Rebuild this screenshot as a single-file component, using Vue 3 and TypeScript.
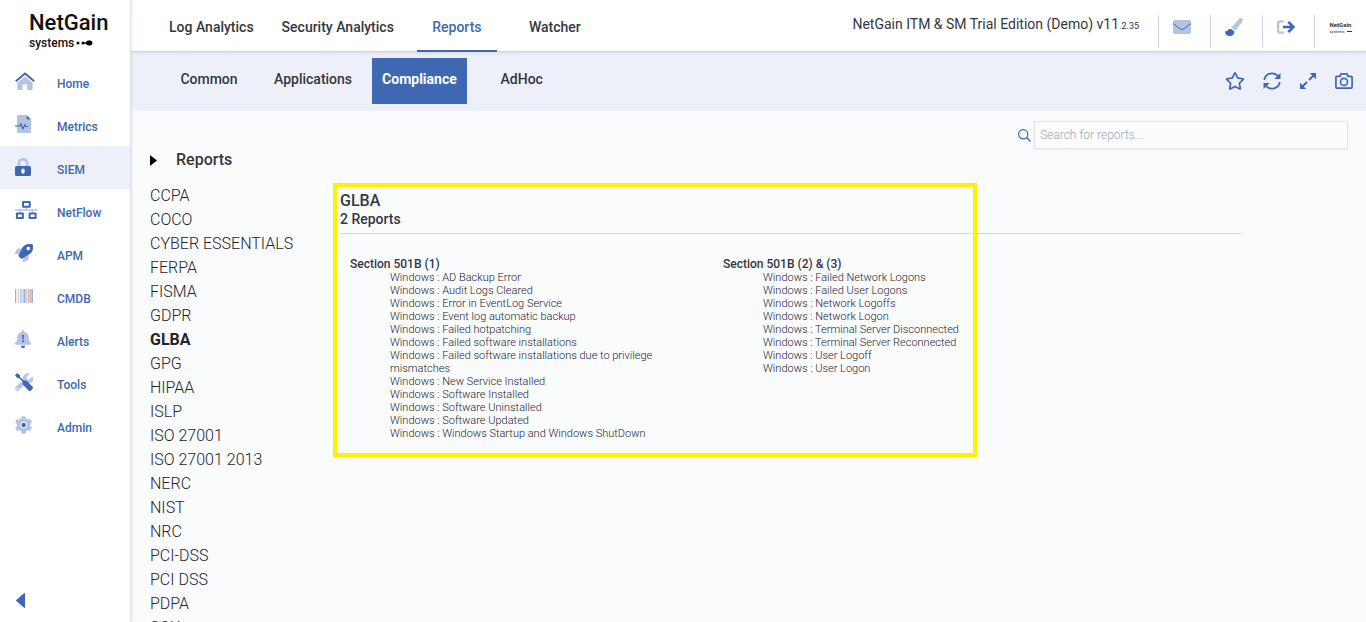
<script setup lang="ts">
import { ref } from 'vue'

interface Section {
  title: string
  reports: string[]
}

const sideItems = ['Home', 'Metrics', 'SIEM', 'NetFlow', 'APM', 'CMDB', 'Alerts', 'Tools', 'Admin']
const activeSide = ref('SIEM')

const mainTabs = ['Log Analytics', 'Security Analytics', 'Reports', 'Watcher']
const activeMain = ref('Reports')

const subTabs = ['Common', 'Applications', 'Compliance', 'AdHoc']
const activeSub = ref('Compliance')

const standards = [
  'CCPA', 'COCO', 'CYBER ESSENTIALS', 'FERPA', 'FISMA', 'GDPR', 'GLBA', 'GPG', 'HIPAA', 'ISLP',
  'ISO 27001', 'ISO 27001 2013', 'NERC', 'NIST', 'NRC', 'PCI-DSS', 'PCI DSS', 'PDPA', 'SOX',
]
const activeStandard = ref('GLBA')

const sections: Section[] = [
  {
    title: 'Section 501B (1)',
    reports: [
      'AD Backup Error',
      'Audit Logs Cleared',
      'Error in EventLog Service',
      'Event log automatic backup',
      'Failed hotpatching',
      'Failed software installations',
      'Failed software installations due to privilege mismatches',
      'New Service Installed',
      'Software Installed',
      'Software Uninstalled',
      'Software Updated',
      'Windows Startup and Windows ShutDown',
    ],
  },
  {
    title: 'Section 501B (2) & (3)',
    reports: [
      'Failed Network Logons',
      'Failed User Logons',
      'Network Logoffs',
      'Network Logon',
      'Terminal Server Disconnected',
      'Terminal Server Reconnected',
      'User Logoff',
      'User Logon',
    ],
  },
]

const query = ref('')
</script>

<template>
  <div class="app">
    <aside class="sidebar">
      <a class="logo" href="#" aria-label="NetGain systems">
        <span class="logo-name">NetGain</span>
        <span class="logo-sub">systems
          <svg width="17" height="6" viewBox="0 0 17 6" aria-hidden="true">
            <circle cx="2" cy="3" r="1.5" />
            <circle cx="7" cy="3" r="1.5" />
            <path d="M7 2.3h5v1.4H7z" />
            <rect x="10" y="0.6" width="6.5" height="4.8" rx="2.4" />
          </svg>
        </span>
      </a>
      <nav class="side-nav">
        <a
          v-for="item in sideItems"
          :key="item"
          href="#"
          class="side-item"
          :class="{ active: item === activeSide }"
          @click.prevent="activeSide = item"
        >
          <span class="side-icon">
            <svg v-if="item === 'Home'" width="20" height="18" viewBox="0 0 20 18">
              <path class="soft" d="M10 4.6 2.4 10.8V17.2a.7.7 0 0 0 .7.8H7.6V12.5H12.2V18h4.6a.8.8 0 0 0 .8-.8V10.8z" />
              <path class="line" d="M.8 9.3 10 1.6l9.2 7.7" stroke-width="2" />
            </svg>
            <svg v-else-if="item === 'Metrics'" width="17" height="18" viewBox="0 0 17 18">
              <path class="soft" d="M3 0h8.5v4.6H16V17a1 1 0 0 1-1 1H3a1 1 0 0 1-1-1V1a1 1 0 0 1 1-1z" />
              <path class="deep" d="M11.5 0 16 4.6h-4.5z" />
              <path class="line" d="M0 11h4.6l1.3-2.2 2 5 2-4 .9 1.7H13" stroke-width="1.1" />
            </svg>
            <svg v-else-if="item === 'SIEM'" width="16" height="18" viewBox="0 0 16 18">
              <path class="soft" d="M2.5 8V5.4a5.5 5.5 0 0 1 11 0V8h-2.8V5.4a2.7 2.7 0 0 0-5.4 0V8z" />
              <path class="deep" fill-rule="evenodd" d="M1.6 8h12.8A1.6 1.6 0 0 1 16 9.6v6.8a1.6 1.6 0 0 1-1.6 1.6H1.6A1.6 1.6 0 0 1 0 16.4V9.6A1.6 1.6 0 0 1 1.6 8zM8 10.4a1.7 1.7 0 0 0-1.7 1.7v2a1.7 1.7 0 0 0 3.4 0v-2A1.7 1.7 0 0 0 8 10.4z" />
            </svg>
            <svg v-else-if="item === 'NetFlow'" width="23" height="18" viewBox="0 0 23 18">
              <path class="soft" d="M0 8.3h22.5v1.5H0zM10.5 6h1.5v3h-1.5zM4.3 9h1.5v3H4.3zM16.7 9h1.5v3h-1.5z" />
              <path class="line" d="M8 1.1h6.7v4.7H8zM1.9 12.4h6v4.5h-6zM14.6 12.4h6v4.5h-6z" stroke-width="2" stroke-linejoin="round" />
            </svg>
            <svg v-else-if="item === 'APM'" width="18" height="18" viewBox="0 0 18 18">
              <path class="soft" d="M7 4.5H3.3a1.7 1.7 0 0 0-1.5.9L.1 8.9a.8.8 0 0 0 .7 1.2h3.7zM13.5 11v3.7a1.7 1.7 0 0 1-.9 1.500l-3.5 1.7a.8.8 0 0 1-1.2-.7v-3.7z" />
              <path class="deep" fill-rule="evenodd" d="M17.8.7a.6.6 0 0 0-.5-.5C11.5-.9 8.6 1.5 6.8 4.7L3.7 10.9a1.1 1.1 0 0 0 .2 1.6l1.7 1.7a1.1 1.1 0 0 0 1.5.2l6.2-3.3C16.5 9.3 18.9 6.5 17.8.7zM13.3 6.4a1.8 1.8 0 1 1 0-3.600 1.800 1.800 0 0 1 0 3.600z" />
            </svg>
            <svg v-else-if="item === 'CMDB'" width="18" height="18" viewBox="0 0 18 18" shape-rendering="crispEdges">
              <path fill="#a3b1d4" d="M0 2h1v14H0zM9 2h1v14H9zM17 2h1v14h-1z" />
              <path fill="#f7e2d8" d="M1 2h1v14H1zM7 2h1v14H7zM12 2h1v14h-1z" />
              <path fill="#c9cde8" d="M3 2h1v14H3zM11 2h1v14h-1z" />
              <path fill="#a6d9f2" d="M5 2h2v14H5zM10 2h1v14h-1zM14 2h1v14h-1z" />
              <path fill="#e5bcb2" d="M13 2h1v14h-1zM15 2h1v14h-1z" />
              <path fill="#b9cbea" d="M8 2h1v14H8zM16 2h1v14h-1z" />
            </svg>
            <svg v-else-if="item === 'Alerts'" width="16" height="18" viewBox="0 0 16 18">
              <path class="soft" d="M15.700 12.700c-.7-.7-2-1.800-2-5.400 0-2.700-1.900-4.900-4.600-5.500V1.100a1.100 1.100 0 0 0-2.200 0v.7C4.200 2.400 2.300 4.600 2.300 7.300c0 3.600-1.300 4.700-2 5.400-.7.800-.2 2.100.8 2.100h13.800c1 0 1.500-1.300.8-2.100z" />
              <path class="deep" d="M5.800 15.800h4.500a2.250 2.250 0 0 1-4.500 0zM7 5h2l-.4 4.500H7.400z" />
              <circle class="deep" cx="8" cy="11.300" r="1.100" />
            </svg>
            <svg v-else-if="item === 'Tools'" width="18" height="18" viewBox="0 0 18 18">
              <path class="soft" fill-rule="evenodd" d="M17.800 4.200a.5.500 0 0 0-.8-.2l-2.600 2.600-2.400-.4-.4-2.400 2.600-2.600a.5.500 0 0 0-.2-.8 5.100 5.100 0 0 0-6 6.500L.7 14.200a2.200 2.200 0 0 0 3.100 3.100l7-7a5 5 0 0 0 7-6.100zM2.300 16.500a.8.800 0 1 1 0-1.700.8.800 0 0 1 0 1.700z" />
              <path class="deep" d="M2.200 0 0 2.200l2.200 2.900h1.700l4 3.900c-.5 1-.4 2.300.4 3.100l5.200 5.300a1.700 1.700 0 0 0 2.400 0l1.500-1.500a1.700 1.700 0 0 0 0-2.400l-5.300-5.200c-.8-.8-2.100-1-3.100-.5l-4-3.900V2.200z" />
            </svg>
            <svg v-else width="18" height="18" viewBox="0 0 18 18">
              <path class="soft" d="M16.700 11.100 15.200 10.200a7 7 0 0 0 0-2.500l1.500-.9a.5.500 0 0 0 .2-.5 8.700 8.700 0 0 0-1.900-3.300.4.400 0 0 0-.5-.1l-1.500.9a6.800 6.800 0 0 0-2.200-1.300V.900a.4.400 0 0 0-.3-.4 8.800 8.800 0 0 0-3.800 0 .4.400 0 0 0-.3.400v1.700a6.800 6.800 0 0 0-2.200 1.300l-1.500-.9a.4.400 0 0 0-.5.100A8.700 8.700 0 0 0 .3 6.300a.4.400 0 0 0 .2.500l1.500.9a7 7 0 0 0 0 2.500l-1.500.9a.4.400 0 0 0-.2.500 8.700 8.700 0 0 0 1.900 3.300.4.400 0 0 0 .5.100l1.500-.9a6.800 6.800 0 0 0 2.200 1.300v1.700a.4.400 0 0 0 .3.400 8.800 8.800 0 0 0 3.800 0 .4.400 0 0 0 .3-.4v-1.700a6.800 6.800 0 0 0 2.200-1.300l1.500.9a.4.400 0 0 0 .5-.1 8.700 8.700 0 0 0 1.900-3.300.4.400 0 0 0-.2-.5z" />
              <circle fill="#fff" cx="8.700" cy="9" r="3.200" />
              <circle class="deep" cx="8.700" cy="9" r="2.200" />
            </svg>
          </span>
          <span class="side-label">{{ item }}</span>
        </a>
      </nav>
      <button class="collapse" type="button" aria-label="Collapse menu">
        <svg width="9" height="15" viewBox="0 0 9 15"><path class="deep" d="M9 .6v13.800a.6.600 0 0 1-1 .4L.3 8.100a.8.800 0 0 1 0-1.200L8 .2a.6.600 0 0 1 1 .4z" /></svg>
      </button>
    </aside>

    <div class="main">
      <header class="topbar">
        <nav class="main-tabs">
          <a
            v-for="tab in mainTabs"
            :key="tab"
            href="#"
            class="main-tab"
            :class="{ active: tab === activeMain }"
            @click.prevent="activeMain = tab"
          >{{ tab }}</a>
        </nav>
        <div class="edition">NetGain ITM &amp; SM Trial Edition (Demo) v11<small>.2.35</small></div>
        <div class="top-actions">
          <button class="top-action" type="button" aria-label="Messages">
            <svg width="18" height="18" viewBox="0 0 18 18">
              <rect class="soft" x="0" y="2" width="18" height="14" rx="1.700" />
              <path class="line" d="M.2 5.500 7.400 11q1.600 1.100 3.200 0l7.200-5.500" stroke-width="1" />
            </svg>
          </button>
          <button class="top-action" type="button" aria-label="Theme">
            <svg width="18" height="18" viewBox="0 0 18 18">
              <path class="soft" d="M15.800 0a2.600 2.600 0 0 0-1.700.7L7.200 8.800c-.3.400-.4.900-.4 1.300l2.900 2.500c.5 0 1-.3 1.400-.8l6.300-8.600C18.500 1.700 17.400 0 15.800 0z" />
              <path class="deep" d="M5.500 11c-3 0-2.900 2.500-4.500 2.500-.4 0-.7-.3-1-.5C0 16 2 18 4.800 18c2.900 0 4.500-1.700 4.500-4.200v-.4l-2.600-2.200z" />
            </svg>
          </button>
          <button class="top-action" type="button" aria-label="Log out">
            <svg width="18" height="18" viewBox="0 0 18 18">
              <path class="soft" d="M6.700 2.300H3.200A3.200 3.200 0 0 0 0 5.500v7a3.200 3.200 0 0 0 3.200 3.200h3.500v-2.200H3.200a1 1 0 0 1-1-1v-7a1 1 0 0 1 1-1h3.500z" />
              <path class="line" d="M6 9h10.300M11.300 3.800 16.400 9l-5.100 5.200" stroke-width="2.600" />
            </svg>
          </button>
          <a class="top-action brand" href="#" aria-label="NetGain systems">
            <span class="brand-name">NetGain</span>
            <span class="brand-sub">systems <i></i></span>
          </a>
        </div>
      </header>

      <div class="subbar">
        <nav class="sub-tabs">
          <a
            v-for="tab in subTabs"
            :key="tab"
            href="#"
            class="sub-tab"
            :class="{ active: tab === activeSub }"
            @click.prevent="activeSub = tab"
          >{{ tab }}</a>
        </nav>
        <div class="page-actions">
          <button type="button" aria-label="Favourite">
            <svg width="20" height="18" viewBox="0 0 576 512"><path class="deep" d="M528.1 171.5L382 150.200 316.700 17.800c-11.700-23.600-45.600-23.900-57.400 0L194 150.200 47.900 171.500c-26.200 3.800-36.700 36.100-17.700 54.600l105.700 103-25 145.500c-4.500 26.300 23.200 46 46.400 33.700L288 439.600l130.700 68.700c23.200 12.200 50.900-7.400 46.400-33.700l-25-145.500 105.700-103c19-18.500 8.500-50.800-17.700-54.600zM388.600 312.300l23.700 138.400L288 385.400l-124.300 65.300 23.700-138.400-100.600-98 139-20.200 62.200-126 62.200 126 139 20.200-100.600 98z" /></svg>
          </button>
          <button type="button" aria-label="Refresh">
            <svg width="18" height="18" viewBox="0 0 18 18">
              <path class="line" d="M1.200 8A7.800 7.800 0 0 1 15 4.300M16.800 10A7.800 7.800 0 0 1 3 13.700" stroke-width="1.700" />
              <path class="deep" d="M17.500 1v6h-6.200zM.5 17v-6h6.200z" />
            </svg>
          </button>
          <button type="button" aria-label="Expand">
            <svg width="18" height="18" viewBox="0 0 18 18">
              <path class="line" d="M3 15 8 10M10 8l5-5" stroke-width="1.900" />
              <path class="deep" d="M10.800 1H17v6.200l-2-1.900-2.300-2.300zM7.200 17H1v-6.200l2 1.900 2.300 2.300z" />
            </svg>
          </button>
          <button type="button" aria-label="Snapshot">
            <svg width="18" height="18" viewBox="0 0 18 18">
              <path class="line" d="M2 4.300h3l1-2.400h6l1 2.400h3a1.100 1.100 0 0 1 1.100 1.100v9.700a1.100 1.100 0 0 1-1.100 1.100H2A1.100 1.100 0 0 1 .9 15.100V5.400A1.100 1.100 0 0 1 2 4.300z" stroke-width="1.700" />
              <circle class="line" cx="9" cy="9.900" r="3.500" stroke-width="1.600" />
            </svg>
          </button>
        </div>
      </div>

      <main class="content">
        <div class="search">
          <label for="report-search" aria-label="Search">
            <svg width="13" height="13" viewBox="0 0 13 13">
              <circle class="line" cx="5.200" cy="5.200" r="4.600" stroke-width="1.200" />
              <path class="line" d="m8.600 8.600 3.900 3.900" stroke-width="1.400" />
            </svg>
          </label>
          <input id="report-search" v-model="query" type="text" placeholder="Search for reports...">
        </div>

        <h1 class="title">
          <svg width="7" height="11" viewBox="0 0 7 11" aria-hidden="true"><path d="M0 0 7 5.500 0 11z" /></svg>
          Reports
        </h1>

        <div class="columns">
          <ul class="standards">
            <li v-for="name in standards" :key="name">
              <a
                href="#"
                :class="{ active: name === activeStandard }"
                @click.prevent="activeStandard = name"
              >{{ name }}</a>
            </li>
          </ul>

          <section class="detail">
            <div class="highlight"></div>
            <header class="detail-head">
              <h2>{{ activeStandard }}</h2>
              <p>{{ sections.length }} Reports</p>
            </header>
            <div class="sections">
              <div v-for="section in sections" :key="section.title">
                <h3>{{ section.title }}</h3>
                <ul>
                  <li v-for="report in section.reports" :key="report">
                    <a href="#">Windows : {{ report }}</a>
                  </li>
                </ul>
              </div>
            </div>
          </section>
        </div>
      </main>
    </div>
  </div>
</template>

<style>
body {
  margin: 0;
  overflow: hidden;
}
</style>

<style scoped>
.app {
  display: flex;
  height: 100vh;
  overflow: hidden;
  background: #fafbfd;
  color: #343741;
  font-family: Roboto, "Liberation Sans", sans-serif;
}

.app * {
  box-sizing: border-box;
}

a {
  color: inherit;
  text-decoration: none;
}

button {
  display: flex;
  padding: 0;
  border: 0;
  background: none;
  cursor: pointer;
}

svg {
  display: block;
  flex: none;
}

ul {
  margin: 0;
  padding: 0;
  list-style: none;
}

h1,
h2,
h3,
p {
  margin: 0;
  font-weight: 500;
}

.deep {
  fill: #4068b2;
}

.soft {
  fill: #b3c3e1;
}

.line {
  fill: none;
  stroke: #4068b2;
}

.sidebar {
  display: flex;
  flex: none;
  flex-direction: column;
  width: 130px;
  background: #fff;
  box-shadow: 1px 0 3px #ccd4e6;
  z-index: 2;
}

.logo {
  display: flex;
  flex-direction: column;
  height: 60px;
  padding: 10px 0 0 29px;
  color: #111;
}

.logo-name {
  font-size: 22px;
  font-weight: 500;
  line-height: 26px;
}

.logo-sub {
  display: flex;
  align-items: center;
  gap: 2px;
  font-size: 12px;
  font-weight: 500;
  line-height: 14px;
}

.side-item {
  display: flex;
  align-items: center;
  height: 43px;
  padding-left: 15px;
  color: #4068b2;
  font-size: 12px;
  font-weight: 500;
  line-height: 16px;
}

.side-item.active {
  background: #edf0f8;
}

.side-icon {
  width: 42px;
  padding-bottom: 2px;
}

.side-label {
  padding-top: 4px;
}

.collapse {
  margin: auto 0 14px 16px;
}

.main {
  display: flex;
  flex: 1;
  flex-direction: column;
  min-width: 0;
}

.topbar {
  display: flex;
  flex: none;
  height: 52px;
  padding: 0 0 0 34px;
  border-bottom: 1px solid #ccd3e2;
  background: #fff;
  box-shadow: 0 1px 3px #d5dbe8;
  z-index: 1;
}

.main-tabs {
  display: flex;
  gap: 18px;
  font-size: 14px;
  font-weight: 500;
}

.main-tab {
  display: flex;
  align-items: center;
  justify-content: center;
  min-width: 80px;
  height: 52px;
  padding: 4px 5px 0;
  border-bottom: 2px solid transparent;
}

.main-tab.active {
  border-color: #4068b2;
  color: #4068b2;
}

.edition {
  margin-left: auto;
  padding-top: 14px;
  font-size: 14px;
  line-height: 20px;
  white-space: nowrap;
}

.edition small {
  font-size: 9px;
}

.top-actions {
  display: flex;
  margin-left: 19px;
  padding-top: 15px;
}

.top-action {
  display: flex;
  align-items: center;
  justify-content: center;
  width: 52px;
  height: 33px;
  padding: 0 5px 9px 0;
  border-left: 1px solid #cdd6e6;
}

.brand {
  flex-direction: column;
  padding: 0 0 9px;
  color: #333;
}

.brand-name {
  font-size: 6px;
  font-weight: 700;
  line-height: 8px;
}

.brand-sub {
  display: flex;
  align-items: center;
  gap: 2px;
  font-size: 4px;
  line-height: 5px;
}

.brand-sub i {
  width: 5px;
  height: 1px;
  background: #333;
}

.subbar {
  display: flex;
  flex: none;
  align-items: center;
  justify-content: space-between;
  height: 59px;
  padding: 0 13px 2px 34px;
  background: #edf0f8;
}

.sub-tabs {
  display: flex;
  gap: 10px;
  font-size: 14px;
  font-weight: 500;
}

.sub-tab {
  display: flex;
  align-items: center;
  justify-content: center;
  min-width: 90px;
  height: 46px;
  padding: 0 10px 4px;
}

.sub-tab.active {
  background: #4068b2;
  color: #fff;
  font-weight: 700;
}

.page-actions {
  display: flex;
  align-items: center;
  gap: 18px;
}

.content {
  flex: 1;
  min-height: 0;
  padding: 10px 18px 0 20px;
  overflow: hidden;
}

.search {
  display: flex;
  align-items: center;
  justify-content: flex-end;
  gap: 3px;
}

.search input {
  width: 314px;
  height: 28px;
  padding: 0 5px;
  border: 1px solid #dfe3f0;
  outline: 0;
  background: #fbfcfe;
  box-shadow: 0 1px 2px #eceff6;
  font-family: inherit;
  font-size: 12px;
  font-weight: 300;
}

.search input::placeholder {
  color: #a3a6ad;
}

.title {
  display: flex;
  align-items: center;
  gap: 19px;
  font-size: 16px;
  line-height: 22px;
}

.columns {
  display: flex;
  margin-top: 12px;
}

.standards {
  flex: none;
  width: 190px;
  padding-top: 1px;
  color: #22252d;
  font-size: 16px;
  font-weight: 300;
  line-height: 24px;
}

.standards .active {
  font-weight: 700;
}

.detail {
  position: relative;
  flex: 1;
  margin-right: 107px;
  padding-top: 8px;
}

.highlight {
  position: absolute;
  top: 0;
  left: -7px;
  width: 644px;
  height: 274px;
  border: 4px solid #fff200;
  pointer-events: none;
}

.detail-head {
  padding-bottom: 5px;
  border-bottom: 1px solid #cdd6e6;
}

.detail-head h2 {
  font-size: 16px;
  line-height: 19px;
}

.detail-head p {
  font-size: 14px;
  line-height: 18px;
}

.sections {
  display: grid;
  grid-template-columns: repeat(2, 343px);
  gap: 30px;
  padding: 23px 0 0 10px;
}

.sections h3 {
  font-size: 12px;
  line-height: 14px;
}

.sections ul {
  padding-left: 40px;
  color: #22252d;
  font-size: 11px;
  font-weight: 300;
  line-height: 13px;
}
</style>
